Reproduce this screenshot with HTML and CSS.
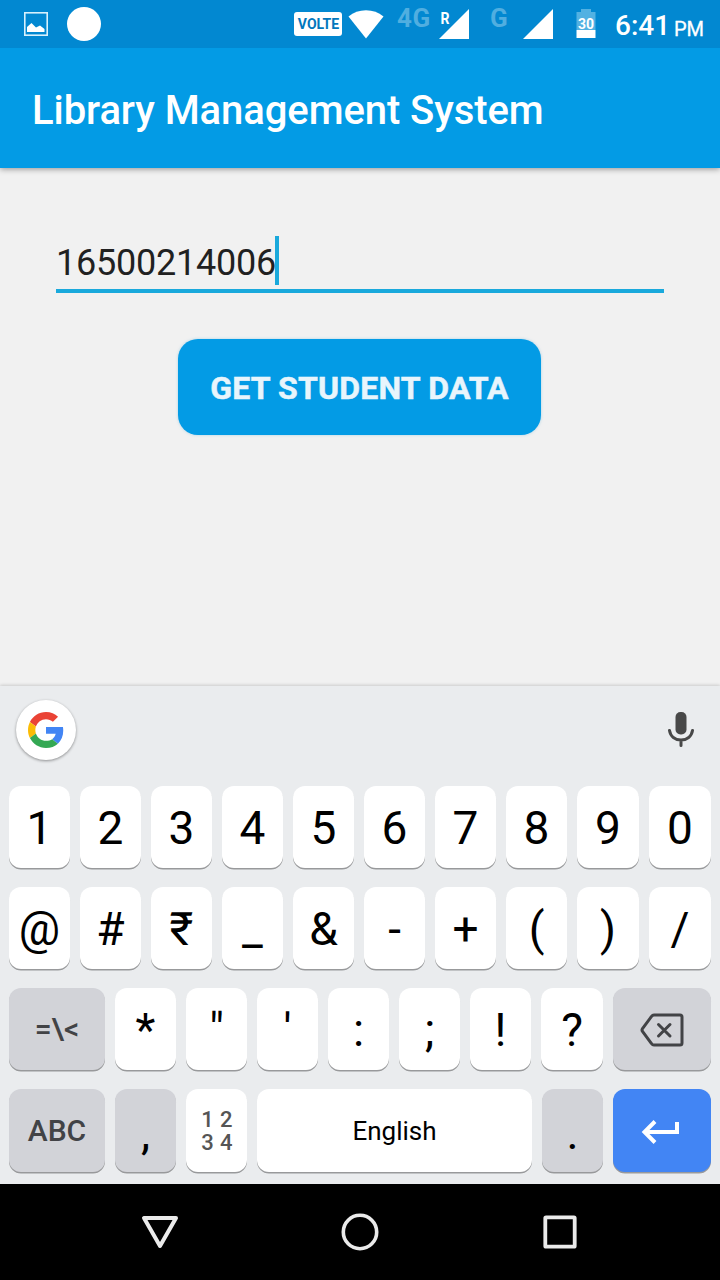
FILE: index.html
```html
<!DOCTYPE html>
<html lang="en">
<head>
<meta charset="utf-8">
<title>Library Management System</title>
<link rel="stylesheet" href="styles.css">
</head>
<body>
<div class="screen">
  <div class="status">
    <svg class="st-picture" width="24" height="24" viewBox="0 0 24 24"><rect x="0.8" y="0.8" width="22.4" height="22.4" fill="none" stroke="#d8f1fc" stroke-width="1.6"/><path d="M3 20V15L7.500 11L12 15.500L16 13.500L20.500 17V20Z" fill="#fff"/></svg>
    <span class="st-dot"></span>
    <span class="st-volte">VOLTE</span>
    <svg class="st-wifi" width="36" height="29" viewBox="0 0 36 29"><path d="M0.500 6.500Q8 0.300 18 0.300T35.500 6.500L18 28.500Z" fill="#fff"/></svg>
    <span class="st-net st-4g">4G</span>
    <svg class="st-roam" width="30" height="30" viewBox="0 0 30 30"><path d="M30 0V30H0Z" fill="#fff"/><text x="1.500" y="14.500" class="roam-text" textLength="9" lengthAdjust="spacingAndGlyphs">R</text></svg>
    <span class="st-net st-g">G</span>
    <svg class="st-signal" width="30" height="30" viewBox="0 0 30 30"><path d="M30 0V30H0Z" fill="#fff"/></svg>
    <svg class="st-battery" width="20" height="30" viewBox="0 0 20 30"><path d="M5 0H15V3H19.500V21H0.500V3H5Z" fill="#52b1e2"/><path d="M0.500 21H19.500V29H0.500Z" fill="#fff"/><text x="10" y="19.500" class="battery-text" text-anchor="middle">30</text></svg>
    <span class="st-time">6:41</span>
    <span class="st-pm">PM</span>
  </div>
  <header class="appbar"><h1 class="title">Library Management System</h1></header>
  <main class="content">
    <div class="field"><span class="value">16500214006</span><span class="caret"></span></div>
    <button class="submit">GET STUDENT DATA</button>
  </main>
  <section class="keyboard">
    <div class="toolbar">
      <span class="google"><svg width="36" height="36" viewBox="0 0 48 48"><path fill="#EA4335" d="M24 9.500c3.540 0 6.710 1.220 9.210 3.600l6.850-6.850C35.900 2.380 30.470 0 24 0 14.620 0 6.510 5.380 2.560 13.220l7.980 6.190C12.430 13.720 17.740 9.500 24 9.500z"/><path fill="#4285F4" d="M46.980 24.550c0-1.570-.15-3.090-.38-4.550H24v9.020h12.940c-.58 2.960-2.260 5.480-4.780 7.180l7.730 6c4.510-4.180 7.090-10.360 7.090-17.650z"/><path fill="#FBBC05" d="M10.530 28.590c-.48-1.450-.76-2.990-.76-4.590s.27-3.140.76-4.590l-7.980-6.190C.92 16.460 0 20.120 0 24c0 3.880.92 7.540 2.560 10.780l7.970-6.190z"/><path fill="#34A853" d="M24 48c6.480 0 11.930-2.130 15.890-5.810l-7.730-6c-2.150 1.450-4.920 2.300-8.160 2.300-6.260 0-11.570-4.220-13.470-9.910l-7.980 6.190C6.510 42.620 14.620 48 24 48z"/></svg></span>
      <svg class="mic" width="26" height="36" viewBox="0 0 26 36"><rect x="7.500" y="0" width="11" height="22.500" rx="5" fill="#484848"/><path d="M1.500 18.500C2.500 24.500 7 28 13 28S23.500 24.500 24.500 18.500M13 28V33.500" fill="none" stroke="#484848" stroke-width="3" stroke-linecap="round"/></svg>
    </div>
    <div class="keys">
      <div class="row digits"><span class="key">1</span><span class="key">2</span><span class="key">3</span><span class="key">4</span><span class="key">5</span><span class="key">6</span><span class="key">7</span><span class="key">8</span><span class="key">9</span><span class="key">0</span></div>
      <div class="row digits"><span class="key">@</span><span class="key">#</span><span class="key">₹</span><span class="key">_</span><span class="key">&amp;</span><span class="key">-</span><span class="key">+</span><span class="key">(</span><span class="key">)</span><span class="key">/</span></div>
      <div class="row symbols"><span class="key dark more">=\&lt;</span><span class="key">*</span><span class="key">"</span><span class="key">'</span><span class="key">:</span><span class="key">;</span><span class="key">!</span><span class="key">?</span><span class="key dark"><svg width="44" height="34" viewBox="0 0 44 34"><path d="M14 2H40Q42 2 42 4V30Q42 32 40 32H14Q12.500 32 11.500 30.500L2.500 18.500Q1.500 17 2.500 15.500L11.500 3.500Q12.500 2 14 2Z" fill="none" stroke="#424346" stroke-width="3"/><path d="M18.500 11.500L30 23M30 11.500L18.500 23" stroke="#424346" stroke-width="3" stroke-linecap="round"/></svg></span></div>
      <div class="row bottom"><span class="key dark abc">ABC</span><span class="key dark">,</span><span class="key numpad"><span>1 2</span><span>3 4</span></span><span class="key space">English</span><span class="key dark">.</span><span class="key enter"><svg width="40" height="26" viewBox="0 0 40 26"><path d="M36 3V13H4M14 2.500L3.500 13L14 23.500" fill="none" stroke="#fff" stroke-width="4"/></svg></span></div>
    </div>
  </section>
  <nav class="nav">
    <svg width="40" height="40" viewBox="0 0 40 40"><path d="M4 6H36L20 34Z" fill="none" stroke="#ebebeb" stroke-width="4" stroke-linejoin="round"/></svg>
    <svg width="40" height="40" viewBox="0 0 40 40"><circle cx="20" cy="20" r="16.700" fill="none" stroke="#ebebeb" stroke-width="3.600"/></svg>
    <svg width="40" height="40" viewBox="0 0 40 40"><rect x="5.300" y="5.300" width="29.400" height="29.400" rx="0.800" fill="none" stroke="#ebebeb" stroke-width="3.800"/></svg>
  </nav>
</div>
</body>
</html>
```
FILE: styles.css
```css
* { box-sizing: border-box; }
body { margin: 0; font-family: Roboto, "Noto Sans", sans-serif; }
svg { display: block; flex: none; }
.screen { width: 720px; height: 1280px; display: flex; flex-direction: column; background: #f1f1f1; overflow: hidden; }

.status { position: relative; z-index: 1; flex: none; height: 48px; display: flex; align-items: flex-start; background: #0288d1; color: #fff; padding-left: 24px; white-space: nowrap; }
.st-picture { margin-top: 12px; }
.st-dot { width: 34px; height: 34px; margin: 7px 0 0 19px; border-radius: 50%; background: #fff; }
.st-volte { width: 48px; height: 24px; margin: 12px 0 0 193px; padding-left: 1px; border-radius: 3px; background: #fff; color: #0277bd; font-size: 14px; font-weight: 700; line-height: 24px; text-align: center; }
.st-wifi { margin: 10px 0 0 6px; }
.st-net { color: #50aee0; font-size: 26px; font-weight: 700; line-height: 30px; margin-top: 3px; }
.st-4g { width: 41px; margin-left: 13px; letter-spacing: 0.6px; }
.st-roam { margin: 9px 0 0 1px; overflow: visible; }
.roam-text { font-size: 16px; font-weight: 700; fill: #fff; }
.st-g { width: 33px; margin-left: 21px; }
.st-signal { margin-top: 9px; }
.st-battery { margin: 9px 0 0 23px; }
.battery-text { font-size: 14px; font-weight: 700; fill: #fff; }
.st-time { width: 59px; margin: 9px 0 0 19px; font-size: 28px; font-weight: 500; line-height: 33px; }
.st-pm { margin-top: 16px; font-size: 20px; line-height: 26px; font-weight: 400; -webkit-text-stroke: 0.3px #fff; }

.appbar { flex: none; height: 120px; display: flex; align-items: center; padding: 6px 0 0 32px; background: #039be5; box-shadow: 0 1px 6px rgba(0, 0, 0, .4); }
.title { margin: 0; color: #fff; font-size: 40px; font-weight: 500; line-height: 48px; letter-spacing: -0.08px; white-space: nowrap; }

.content { flex: none; height: 518px; padding: 68px 56px 0; display: flex; flex-direction: column; align-items: center; }
.field { width: 100%; height: 57px; display: flex; border-bottom: 4px solid #1aa9dc; color: #212121; }
.value { font-size: 36px; line-height: 54px; width: 219px; letter-spacing: -0.22px; }
.caret { width: 4px; height: 49px; background: #1aa9dc; }
.submit { width: 363px; height: 96px; margin: 46px 1px 0 0; padding: 1px 0 0; border: 0; border-radius: 20px; background: #039be5; color: #e8f5fc; font: 700 32px Roboto, sans-serif; letter-spacing: 0.2px; -webkit-text-stroke: 0.5px #e8f5fc; white-space: nowrap; box-shadow: 0 0 3px rgba(120, 190, 225, .6); }

.keyboard { flex: none; height: 498px; background: #eaecee; box-shadow: 0 -1px 3px rgba(0, 0, 0, .16); }
.toolbar { height: 100px; display: flex; align-items: flex-start; justify-content: space-between; padding: 14px 26px 0 16px; }
.google { width: 60px; height: 60px; border-radius: 50%; background: #fff; display: flex; align-items: center; justify-content: center; box-shadow: 0 1px 3px rgba(0, 0, 0, .4); }
.mic { margin-top: 12px; }
.keys { display: flex; flex-direction: column; gap: 19px; padding: 0 9px; }
.row { display: grid; gap: 10px; height: 82px; }
.digits { grid-template-columns: repeat(8, 61px) 62px 62px; }
.symbols { grid-template-columns: 96px repeat(6, 61px) 62px 98px; }
.bottom { grid-template-columns: 96px 61px 61px 1fr 61px 98px; height: 83px; }
.key { min-width: 0; display: flex; align-items: center; justify-content: center; padding-top: 2px; border-radius: 12px; background: #fff; color: #000; font-size: 46px; line-height: 54px; box-shadow: 0 1.5px 0.5px rgba(0, 0, 0, .35); }
.symbols .key { padding-top: 1px; }
.bottom .key { padding-top: 4px; }
.key.dark { background: #d2d3d8; }
.symbols .more { color: #424346; font-size: 30px; font-weight: 500; padding-top: 0; }
.bottom .abc { color: #424346; font-size: 30px; font-weight: 500; padding-top: 0; }
.bottom .numpad { flex-direction: column; color: #555; font-size: 22px; font-weight: 500; line-height: 23px; letter-spacing: 0.4px; padding: 1px 0 0 1px; }
.bottom .numpad span { height: 23px; }
.bottom .space { font-size: 26px; padding-top: 1px; }
.bottom .enter { background: #4285f4; padding: 2px 2px 0 0; }

.nav { flex: none; height: 96px; display: flex; justify-content: center; align-items: center; gap: 160px; background: #000; }
```
